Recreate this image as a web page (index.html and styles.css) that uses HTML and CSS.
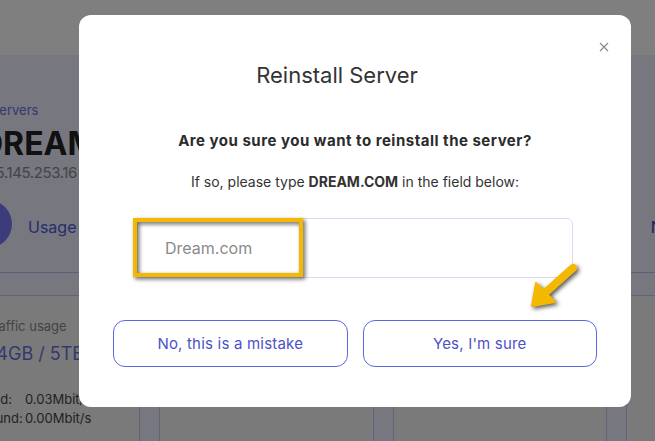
FILE: index.html
```html
<!DOCTYPE html>
<html lang="en">
<head>
    <meta charset="UTF-8">
    <meta name="viewport" content="width=device-width, initial-scale=1.0">
    <title>Reinstall Server</title>
    <link rel="stylesheet" href="styles.css">
</head>
<body>
<div class="page">
    <div class="topbar"></div>

    <main class="content">
        <div class="server-head">
            <a class="crumb" href="#">Servers</a>
            <h1 class="server-name">DREAM.COM</h1>
            <div class="server-ip">185.145.253.16</div>
        </div>

        <nav class="tabs">
            <span class="tab-icon"></span>
            <a class="tab" href="#">Usage <span class="tab-mark">(</span></a>
            <a class="tab tab-right" href="#">Network</a>
        </nav>

        <div class="cards">
            <div class="card">
                <div class="card-label">Traffic usage</div>
                <div class="card-value">14GB / 5TB</div>
                <div class="card-row"><span>Inbound:</span>0.03Mbit/s</div>
                <div class="card-row"><span>Outbound:</span>0.00Mbit/s</div>
            </div>
            <div class="card"></div>
            <div class="card"></div>
            <div class="card"></div>
        </div>
    </main>
</div>

<!-- 모달 배경 -->
<div class="backdrop"></div>

<div class="modal">
    <button class="modal-close" type="button">
        <svg width="10" height="10" viewBox="0 0 10 10"><path d="M1 1L9 9M9 1L1 9" stroke="#8a8a8a" stroke-width="1.2" fill="none"/></svg>
    </button>

    <h2 class="modal-title">Reinstall Server</h2>
    <p class="modal-question">Are you sure you want to reinstall the server?</p>
    <p class="modal-text">If so, please type <b>DREAM.COM</b> in the field below:</p>

    <input class="modal-input" type="text" placeholder="Dream.com">

    <div class="modal-actions">
        <button class="btn" type="button">No, this is a mistake</button>
        <button class="btn" type="button">Yes, I'm sure</button>
    </div>

    <!-- 스크린샷 주석 (노란 박스 + 화살표) -->
    <div class="note-box"></div>
    <svg class="note-arrow" width="56" height="52" viewBox="0 0 56 52">
        <g fill="#f5b800" stroke="#f5b800" stroke-linecap="round" stroke-linejoin="round">
            <path d="M48 5L20 30" stroke-width="8" fill="none"/>
            <path d="M7 43L11 20L30 39Z" stroke-width="2"/>
        </g>
    </svg>
</div>
</body>
</html>
```

FILE: styles.css
```css
* {
    box-sizing: border-box;
}

body {
    margin: 0;
    font-family: Inter, "Noto Sans", "Liberation Sans", sans-serif;
    color: #333;
    background-color: #eceefe;
    overflow: hidden;
}

/* 배경 페이지 */
.page {
    height: 441px;
}

.topbar {
    height: 55px;
    background-color: #ffffff;
}

.content {
    margin-left: -9px;
}

.server-head {
    padding-top: 47px;
}

.crumb {
    display: block;
    font-size: 13px;
    line-height: 16px;
    color: #6a70e0;
    text-decoration: none;
}

.server-name {
    margin: 7px 0 0 -11px;
    font-size: 32px;
    font-weight: 700;
    line-height: 38px;
    color: #222;
}

.server-ip {
    margin: 1px 0 0 -10px;
    font-size: 15px;
    line-height: 18px;
    letter-spacing: -0.4px;
    color: #888;
}

.tabs {
    display: flex;
    align-items: center;
    gap: 16px;
    margin-left: -27px;
    margin-right: -60px;
    padding: 18px 0 24px;
    border-bottom: 1px solid #b8bcf0;
}

.tab-icon {
    width: 48px;
    height: 48px;
    border-radius: 50%;
    background-color: #757af2;
}

.tab {
    padding-top: 6px;
    font-size: 16px;
    color: #5258d8;
    text-decoration: none;
}

.tab-mark {
    color: #d9a23a;
}

.tab-right {
    margin-left: auto;
    color: #3a3ec0;
}

.cards {
    display: grid;
    grid-template-columns: 189px 215px 214px 215px;
    gap: 19px;
    margin-top: 22px;
    margin-left: -40px;
}

.card {
    height: 200px;
    background-color: #f5f5f5;
    border: 1px solid #c4c7ef;
    padding: 22px 0 0 34px;
}

.card-label {
    font-size: 13px;
    line-height: 16px;
    color: #888;
}

.card-value {
    margin: 9px 0 0 3px;
    font-size: 18px;
    line-height: 22px;
    color: #6a70e0;
}

.card-row {
    margin: 26px 0 0 -28px;
    font-size: 13px;
    line-height: 16px;
    color: #444;
}

.card-row + .card-row {
    margin-top: 3px;
}

.card-row span {
    display: inline-block;
    width: 67px;
}

/* 모달 */
.backdrop {
    position: fixed;
    inset: 0;
    background-color: rgba(0, 0, 0, 0.5);
}

.modal {
    position: fixed;
    left: 79px;
    top: 15px;
    width: 552px;
    height: 392px;
    background-color: #ffffff;
    border-radius: 12px;
    padding: 45px 34px 39px;
    text-align: center;
}

.modal-close {
    position: absolute;
    top: 22px;
    right: 17px;
    width: 20px;
    height: 20px;
    padding: 0;
    border: none;
    background: none;
    cursor: pointer;
    display: flex;
    align-items: center;
    justify-content: center;
}

.modal-title {
    margin: 0;
    padding-right: 36px;
    font-size: 22px;
    font-weight: 400;
    line-height: 30px;
    color: #333;
}

.modal-question {
    margin: 41px 0 0;
    font-size: 15px;
    font-weight: 700;
    line-height: 20px;
    letter-spacing: 0.5px;
    color: #2b2b2b;
}

.modal-text {
    margin: 21px 0 0;
    font-size: 14px;
    line-height: 20px;
    color: #333;
}

.modal-text b {
    font-weight: 700;
}

.modal-input {
    display: block;
    width: calc(100% - 48px);
    height: 60px;
    margin: 26px 24px 0;
    padding: 0 27px;
    border: 1px solid #d9dbf6;
    border-radius: 6px;
    font-family: inherit;
    font-size: 16px;
    text-align: left;
    color: #333;
    outline: none;
}

.modal-input::placeholder {
    color: #8a8a8a;
}

.modal-actions {
    display: grid;
    grid-template-columns: 1fr 1fr;
    gap: 15px;
    margin-top: 42px;
}

.btn {
    height: 47px;
    border: 1px solid #5d65e2;
    border-radius: 12px;
    background-color: #ffffff;
    font-family: inherit;
    font-size: 15px;
    letter-spacing: 0.2px;
    color: #4b52c6;
    cursor: pointer;
}

/* 주석 표시 */
.note-box {
    position: absolute;
    left: 54px;
    top: 203px;
    width: 170px;
    height: 59px;
    border: 4px solid #f5b800;
    filter: drop-shadow(2px 2px 2px rgba(0, 0, 0, 0.65));
}

.note-arrow {
    position: absolute;
    left: 446px;
    top: 248px;
    filter: drop-shadow(2px 2px 2px rgba(0, 0, 0, 0.65));
}
```
